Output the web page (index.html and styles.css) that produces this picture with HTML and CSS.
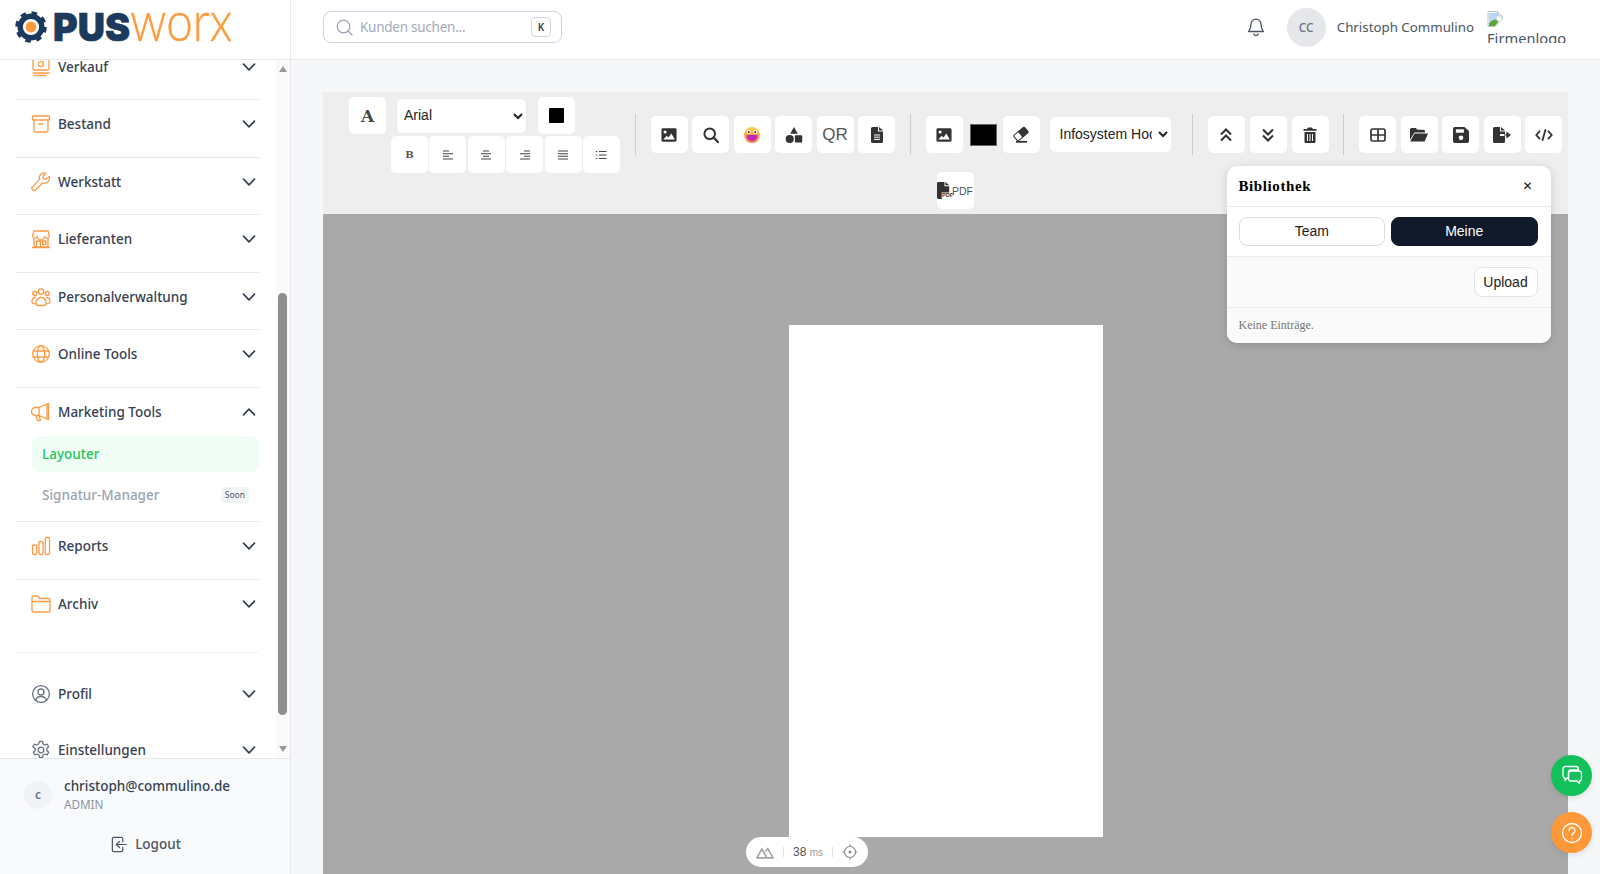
FILE: index.html
```html
<!DOCTYPE html>
<html lang="de">
<head>
<meta charset="utf-8">
<title>Layouter</title>
<link rel="stylesheet" href="styles.css">
</head>
<body>
<svg class="defs" width="0" height="0" aria-hidden="true">
  <symbol id="chev" viewBox="0 0 14 14"><path d="M1.5 4.2 7 9.8l5.5-5.6" fill="none" stroke="currentColor" stroke-width="1.7" stroke-linecap="round" stroke-linejoin="round"/></symbol>
  <symbol id="img" viewBox="0 0 18 16"><rect x=".5" y=".5" width="17" height="15" rx="1.6" fill="currentColor"/><circle cx="4.6" cy="4.6" r="1.7" fill="#fff"/><path d="M2.6 13.2 6.4 8.8l2 2 3.2-4.6 4 7z" fill="#fff"/></symbol>
</svg>
<div class="app">
  <aside class="sidebar">
    <div class="logo-row">
      <svg class="logo" width="232" height="44" viewBox="0 0 232 44">
        <circle cx="31" cy="27" r="13.6" fill="none" stroke="#1b3a5c" stroke-width="4.4" stroke-dasharray="5.3 5.4"/>
        <circle cx="31" cy="27" r="10.8" fill="none" stroke="#1b3a5c" stroke-width="5.4"/>
        <circle cx="31" cy="27" r="5.4" fill="#ff9a3c"/>
        <text class="logo-a" x="53" y="41" textLength="77" lengthAdjust="spacingAndGlyphs">PUS</text>
        <text class="logo-b" x="130" y="41" textLength="102" lengthAdjust="spacingAndGlyphs">worx</text>
      </svg>
    </div>
    <nav class="nav">
      <div class="nav-inner">
        <div class="item"><div class="head">
          <svg class="ico" viewBox="0 0 20 20"><rect x="2" y="1" width="16" height="12" rx="1"/><circle cx="10" cy="7" r="2.6"/><path d="M2 16h16M3 18.5h12"/></svg>
          <span class="label">Verkauf</span><svg class="chev"><use href="#chev"/></svg></div></div>
        <div class="item"><div class="head">
          <svg class="ico" viewBox="0 0 20 20"><rect x="1.5" y="2" width="17" height="4" rx=".8"/><path d="M3 6v10.5a1.5 1.5 0 0 0 1.5 1.5h11a1.5 1.5 0 0 0 1.5-1.5V6M8 10h4"/></svg>
          <span class="label">Bestand</span><svg class="chev"><use href="#chev"/></svg></div></div>
        <div class="item"><div class="head">
          <svg class="ico" viewBox="0 0 20 20"><path d="M18.2 4.4 15 7.4l-2.5-.6-.6-2.5 3-3a5 5 0 0 0-6.4 6.3L1.6 14.6a2.2 2.2 0 0 0 3.2 3.2l7-7a5 5 0 0 0 6.4-6.4z"/></svg>
          <span class="label">Werkstatt</span><svg class="chev"><use href="#chev"/></svg></div></div>
        <div class="item"><div class="head">
          <svg class="ico" viewBox="0 0 20 20"><path d="M3 2h14l1.5 5a2.6 2.6 0 0 1-5 .5 2.8 2.8 0 0 1-7 0 2.6 2.6 0 0 1-5-.5zM3 9.500V18h14V9.500M1.500 18.500h17"/><path d="M5.500 18v-6h4v6M11.500 12h3.500v3.500h-3.500z"/></svg>
          <span class="label">Lieferanten</span><svg class="chev"><use href="#chev"/></svg></div></div>
        <div class="item"><div class="head">
          <svg class="ico" viewBox="0 0 20 20"><circle cx="10" cy="4.500" r="2.700"/><circle cx="3.800" cy="6.500" r="2"/><circle cx="16.200" cy="6.500" r="2"/><path d="M5 17c0-3 .5-6.500 5-6.500s5 3.500 5 6.500a2 2 0 0 1-2 1.500H7A2 2 0 0 1 5 17zM4.300 10.500C2 10.500 1 12 1 14.500s2 2.300 3.500 2.300M15.700 10.500c2.300 0 3.300 1.500 3.300 4s-2 2.300-3.500 2.300"/></svg>
          <span class="label">Personalverwaltung</span><svg class="chev"><use href="#chev"/></svg></div></div>
        <div class="item"><div class="head">
          <svg class="ico" viewBox="0 0 20 20"><circle cx="10" cy="10" r="8.300"/><ellipse cx="10" cy="10" rx="3.700" ry="8.300"/><path d="M2.300 7h15.400M2.300 13h15.400"/></svg>
          <span class="label">Online Tools</span><svg class="chev"><use href="#chev"/></svg></div></div>
        <div class="item"><div class="head">
          <svg class="ico" viewBox="0 0 20 20"><path d="M8 5.500 16 2v15l-8-3.500H4.500a3.500 3.500 0 0 1 0-8zM16 2l1.500-.5V17.500L16 17M8 5.500v8M5 13.500l1.500 5h3L8 13.500"/></svg>
          <span class="label">Marketing Tools</span><svg class="chev up"><use href="#chev"/></svg></div>
          <div class="sub active">Layouter</div>
          <div class="sub muted"><span>Signatur-Manager</span><span class="soon">Soon</span></div>
        </div>
        <div class="item"><div class="head">
          <svg class="ico" viewBox="0 0 20 20"><rect x="1.500" y="9" width="4.200" height="9.500" rx="1.400"/><rect x="7.900" y="5.500" width="4.200" height="13" rx="1.400"/><rect x="14.300" y="1.500" width="4.200" height="17" rx="1.400"/></svg>
          <span class="label">Reports</span><svg class="chev"><use href="#chev"/></svg></div></div>
        <div class="item last"><div class="head">
          <svg class="ico" viewBox="0 0 20 20"><path d="M1 5V3.500A1.500 1.500 0 0 1 2.500 2h4.300l2 2.500h8.700A1.500 1.500 0 0 1 19 6v10.500a1.500 1.500 0 0 1-1.500 1.500h-15A1.500 1.500 0 0 1 1 16.500zM1 7.500h18"/></svg>
          <span class="label">Archiv</span><svg class="chev"><use href="#chev"/></svg></div></div>
        <div class="group-sep"></div>
        <div class="item last plain"><div class="head">
          <svg class="ico gray" viewBox="0 0 20 20"><circle cx="10" cy="10" r="8.400"/><circle cx="10" cy="8" r="3"/><path d="M4.500 16c1-2.500 3-3.500 5.500-3.500s4.500 1 5.500 3.500"/></svg>
          <span class="label">Profil</span><svg class="chev"><use href="#chev"/></svg></div></div>
        <div class="item last plain"><div class="head">
          <svg class="ico gray" viewBox="0 0 20 20"><path d="M8.500 1.500h3l.5 2.500 1.800 1 2.400-.8 1.500 2.600-1.900 1.700v2l1.900 1.700-1.500 2.600-2.400-.8-1.800 1-.5 2.500h-3l-.5-2.500-1.800-1-2.400.8-1.500-2.600 1.900-1.700v-2L1.800 6.800l1.500-2.600 2.400.8 1.800-1z"/><circle cx="10" cy="10" r="2.800"/></svg>
          <span class="label">Einstellungen</span><svg class="chev"><use href="#chev"/></svg></div></div>
      </div>
      <div class="scrollbar">
        <span class="arrow-up"></span>
        <span class="thumb"></span>
        <span class="arrow-down"></span>
      </div>
    </nav>
    <div class="side-foot">
      <div class="user">
        <span class="user-av">c</span>
        <div class="user-text"><div class="mail">christoph@commulino.de</div><div class="role">ADMIN</div></div>
      </div>
      <div class="logout">
        <svg class="logout-ico" viewBox="0 0 18 18"><path d="M13.500 6V3A1.500 1.500 0 0 0 12 1.500H4A1.500 1.500 0 0 0 2.500 3v12A1.500 1.500 0 0 0 4 16.500h8a1.500 1.500 0 0 0 1.500-1.500v-3M17 9H7M10 5.800 6.800 9l3.200 3.200"/></svg>
        <span>Logout</span>
      </div>
    </div>
  </aside>

  <div class="main">
    <header class="topbar">
      <div class="search">
        <svg class="search-ico" viewBox="0 0 18 18"><circle cx="8" cy="8" r="6.700"/><path d="m13 13 4 4"/></svg>
        <span class="placeholder">Kunden suchen...</span>
        <span class="kbd">K</span>
      </div>
      <div class="top-right">
        <svg class="bell" viewBox="0 0 20 20"><path d="M10 2.200a5 5 0 0 0-5 5c0 5-2 6.300-2.500 7.300h15c-.5-1-2.500-2.300-2.500-7.300a5 5 0 0 0-5-5zM7.800 17a2.300 2.300 0 0 0 4.400 0"/></svg>
        <span class="top-av">CC</span>
        <span class="top-name">Christoph Commulino</span>
        <div class="firm">
          <svg class="broken" viewBox="0 0 16 16"><path d="M1 .5h9.500L15 5v3.500L11 12l-3 3.500H1z" fill="#fff" stroke="#b9c2cc"/><path d="M10.500.5V5H15" fill="#dfe6ee" stroke="#b9c2cc"/><path d="M2 2h8v6l-3 2-5 1z" fill="#bcd6f5"/><path d="M2 15v-3c2-2.500 5-3.500 7-3.500l2.500 2L8 15z" fill="#5aa83a"/></svg>
          <div class="firm-text">Firmenlogo</div>
        </div>
      </div>
    </header>

    <main class="content">
      <div class="toolbar">
        <div class="g1">
          <div class="g1-top">
            <span class="btn big-a">A</span>
            <select class="sel font-sel"><option>Arial</option></select>
            <span class="btn"><span class="black-sq"></span></span>
          </div>
          <div class="g1-bot">
            <span class="btn small-b">B</span>
            <span class="btn"><svg class="tic s12" viewBox="0 0 12 12"><path class="ln" d="M1 2h6M1 4.700h10M1 7.300h6M1 10h10"/></svg></span>
            <span class="btn"><svg class="tic s12" viewBox="0 0 12 12"><path class="ln" d="M3 2h6M1 4.700h10M3 7.300h6M1 10h10"/></svg></span>
            <span class="btn"><svg class="tic s12" viewBox="0 0 12 12"><path class="ln" d="M5 2h6M1 4.700h10M5 7.300h6M1 10h10"/></svg></span>
            <span class="btn"><svg class="tic s12" viewBox="0 0 12 12"><path class="ln" d="M1 2h10M1 4.700h10M1 7.300h10M1 10h10"/></svg></span>
            <span class="btn"><svg class="tic s12" viewBox="0 0 12 12"><path class="ln" d="M4 2.500h7.500M4 6h7.500M4 9.500h7.500M.8 2.500h1.500M.8 6h1.500M.8 9.500h1.500"/></svg></span>
          </div>
        </div>
        <span class="sep"></span>
        <div class="grp">
          <span class="btn"><svg class="tic s16"><use href="#img"/></svg></span>
          <span class="btn"><svg class="tic s16" viewBox="0 0 16 16"><circle cx="6.700" cy="6.700" r="5.300" fill="none" stroke="currentColor" stroke-width="2"/><path d="m10.600 10.600 4.600 4.600" stroke="currentColor" stroke-width="2.200" stroke-linecap="round"/></svg></span>
          <span class="btn"><svg class="tic s18" viewBox="0 0 18 18"><defs><linearGradient id="emo" x1="0" y1="0" x2="0" y2="1"><stop offset="0" stop-color="#ffd23f"/><stop offset="1" stop-color="#fb7a52"/></linearGradient></defs><circle cx="9" cy="9" r="8" fill="url(#emo)"/><circle cx="5.800" cy="5.800" r="2" fill="#fff"/><circle cx="12.200" cy="5.800" r="2" fill="#fff"/><circle cx="5.800" cy="6" r="1" fill="#5a3a2a"/><circle cx="12.200" cy="6" r="1" fill="#5a3a2a"/><path d="M3.500 9h11c0 4-2.500 6-5.500 6s-5.500-2-5.500-6z" fill="#c02cb8"/></svg></span>
          <span class="btn"><svg class="tic s18" viewBox="0 0 16 16" fill="currentColor"><path d="M8 .8 11.400 6.800H4.600z"/><circle cx="4.200" cy="11.500" r="3.600"/><rect x="8.800" y="8.200" width="6.500" height="6.500" rx=".8"/></svg></span>
          <span class="btn qr">QR</span>
          <span class="btn"><svg class="tic s16" viewBox="0 0 12 16"><path d="M1.500 0H7v4.500h5V14.500A1.500 1.500 0 0 1 10.500 16h-9A1.500 1.500 0 0 1 0 14.500v-13A1.500 1.500 0 0 1 1.500 0zM8 0l4 3.500H8z" fill="currentColor"/><path d="M3 8h6M3 10.200h6M3 12.400h6" stroke="#fff" stroke-width="1"/></svg></span>
        </div>
        <span class="sep"></span>
        <div class="grp g3">
          <span class="btn"><svg class="tic s16"><use href="#img"/></svg></span>
          <span class="swatch"></span>
          <span class="btn"><svg class="tic s18" viewBox="0 0 18 16"><g transform="rotate(-40 9 7)"><rect x="1.500" y="3" width="15" height="8" rx="1.500" fill="currentColor"/><rect x="2.500" y="4" width="5.500" height="6" rx=".8" fill="#fff"/></g><path d="M4 14.800h11" stroke="currentColor" stroke-width="1.800"/></svg></span>
          <select class="sel info-sel"><option>Infosystem Hochformat</option></select>
        </div>
        <span class="sep wide"></span>
        <div class="grp g4">
          <span class="btn"><svg class="tic s16" viewBox="0 0 16 16"><path d="M3 7.500 8 2.500l5 5M3 13.500l5-5 5 5" fill="none" stroke="currentColor" stroke-width="2.100"/></svg></span>
          <span class="btn"><svg class="tic s16" viewBox="0 0 16 16"><path d="M3 2.500l5 5 5-5M3 8.500l5 5 5-5" fill="none" stroke="currentColor" stroke-width="2.100"/></svg></span>
          <span class="btn"><svg class="tic s16" viewBox="0 0 14 16"><path d="M5 .5h4l1 1.500h3.500v1.800H.5V2H4zM1.500 5h11v9.500a1.500 1.500 0 0 1-1.500 1.500H3a1.500 1.500 0 0 1-1.500-1.500z" fill="currentColor"/><path d="M4.500 7v7M7 7v7M9.500 7v7" stroke="#fff" stroke-width="1"/></svg></span>
        </div>
        <span class="sep"></span>
        <div class="grp g5">
          <span class="btn"><svg class="tic s16" viewBox="0 0 16 14"><rect x="1" y="1" width="14" height="12" rx="1.500" fill="none" stroke="currentColor" stroke-width="1.700"/><path d="M1 7h14M8 1v12" stroke="currentColor" stroke-width="1.700"/></svg></span>
          <span class="btn"><svg class="tic s18" viewBox="0 0 18 15"><path d="M0 2a1.500 1.500 0 0 1 1.500-1.500h4.300l1.700 1.700h6A1.500 1.500 0 0 1 15 3.700V5H4.500L0 12z" fill="currentColor"/><path d="M4.500 6H18l-3.500 8H0z" fill="currentColor"/></svg></span>
          <span class="btn"><svg class="tic s16" viewBox="0 0 14 14"><path d="M1.500 0H10l4 3.500v9A1.500 1.500 0 0 1 12.500 14h-11A1.500 1.500 0 0 1 0 12.500v-11A1.500 1.500 0 0 1 1.500 0z" fill="currentColor"/><rect x="2.500" y="2" width="7" height="3" fill="#fff"/><circle cx="7" cy="9.500" r="2" fill="#fff"/></svg></span>
          <span class="btn"><svg class="tic s18" viewBox="0 0 18 16"><path d="M1.500 0H7v4.500h5V7H7v2h5v5.500a1.500 1.500 0 0 1-1.500 1.500h-9A1.500 1.500 0 0 1 0 14.500v-13A1.500 1.500 0 0 1 1.500 0zM8 0l4 3.500H8z" fill="currentColor"/><path d="M11 8h4.500M14 5.800 17 8l-3 2.200z" stroke="currentColor" stroke-width="1.200" fill="currentColor"/></svg></span>
          <span class="btn"><svg class="tic s18" viewBox="0 0 20 16"><path d="M5.500 3.500 1.500 8l4 4.500M14.500 3.500l4 4.500-4 4.500M11.800 1.500 8.200 14.500" fill="none" stroke="currentColor" stroke-width="2"/></svg></span>
        </div>
        <span class="btn pdf"><svg class="pdf-ico" viewBox="0 0 16 18"><path d="M1.200 0H8v4.500h5V11H5v7H1.200A1.200 1.200 0 0 1 0 16.800V1.200A1.200 1.200 0 0 1 1.200 0zM9 0l4 3.500H9z" fill="currentColor"/></svg><span class="pdf-tiny">PDF</span><span class="pdf-word">PDF</span></span>
      </div>
      <div class="canvas">
        <div class="sheet"></div>
        <div class="status">
          <svg class="nuxt" viewBox="0 0 20 14"><path d="M1 13 6.500 3l5.500 10zM10.500 6l2.500-3.500L19 13h-7" fill="none" stroke="#a3a3a3" stroke-width="1.800" stroke-linejoin="round"/></svg>
          <span class="st-div"></span>
          <span class="ms"><b>38</b> <i>ms</i></span>
          <span class="st-div"></span>
          <svg class="target" viewBox="0 0 16 16"><circle cx="8" cy="8" r="5.500" fill="none" stroke="#8a8a8a" stroke-width="1.200"/><circle cx="8" cy="8" r="1.500" fill="#8a8a8a"/><path d="M8 .5v2M8 13.500v2M.5 8h2M13.500 8h2" stroke="#8a8a8a" stroke-width="1.200"/></svg>
        </div>
      </div>
      <section class="library">
        <div class="lib-head"><span class="lib-title">Bibliothek</span><span class="lib-close">✕</span></div>
        <div class="lib-tabs"><button class="tab">Team</button><button class="tab on">Meine</button></div>
        <div class="lib-upload"><button class="upload">Upload</button></div>
        <div class="lib-empty">Keine Einträge.</div>
      </section>
    </main>
  </div>
</div>
<div class="fab green"><svg viewBox="0 0 24 24"><path d="M6 2.500h10A2.500 2.500 0 0 1 18.500 5v1H11a2.500 2.500 0 0 0-2.500 2.500V14H7l-2 2.500V14a2.500 2.500 0 0 1-2-2.500V5A2.500 2.500 0 0 1 6 2.500z"/><path d="M11 7h8a2.500 2.500 0 0 1 2.500 2.500v5A2.500 2.500 0 0 1 19.500 17v2.500L17 17h-6a2.500 2.500 0 0 1-2.500-2.500v-5A2.500 2.500 0 0 1 11 7z"/></svg></div>
<div class="fab orange"><svg viewBox="0 0 24 24"><circle cx="12" cy="12" r="9.500"/><path d="M9 9.500a3 3 0 1 1 4.500 2.600c-1 .6-1.500 1.200-1.500 2.400M12 17.500v.3"/></svg></div>
</body>
</html>
```
FILE: styles.css
```css
* { box-sizing: border-box; }
html, body { margin: 0; height: 874px; overflow: hidden; }
body { font-family: "Noto Sans", sans-serif; font-size: 13.5px; color: #374151; background: #f6f7f9; }
.defs { position: absolute; }
.app { display: flex; height: 874px; }

/* sidebar */
.sidebar { width: 291px; flex: none; display: flex; flex-direction: column; background: #fff; border-right: 1px solid #e5e7eb; }
.logo-row { height: 60px; flex: none; border-bottom: 1px solid #e5e7eb; }
.logo { display: block; overflow: visible; }
.logo-a { font-family: Inter, sans-serif; font-weight: 900; font-size: 38.5px; fill: #1b3a5c; stroke: #1b3a5c; stroke-width: .6px; }
.logo-b { font-family: Lato, sans-serif; font-weight: 300; font-size: 55px; fill: #ff9a3c; stroke: #ff9a3c; stroke-width: .4px; }
.nav { flex: 1; position: relative; overflow: hidden; }
.nav-inner { margin-top: -17.5px; padding-left: 15px; width: 259px; }
.item { padding-bottom: 8px; border-bottom: 1px solid #e5e7eb; }
.item.last { border-bottom: 0; }
.item.plain { padding-bottom: 8px; }
.head { height: 48.5px; display: flex; align-items: center; padding: 0 3px 0 16px; }
.ico { width: 20px; height: 20px; flex: none; fill: none; stroke: #fb9a45; stroke-width: 1.3; stroke-linejoin: round; stroke-linecap: round; }
.ico.gray { stroke: #6b7280; }
.label { flex: 1; margin-left: 7px; font-weight: 500; color: #374151; }
.chev { width: 14px; height: 14px; flex: none; color: #374151; }
.chev.up { transform: rotate(180deg); }
.sub { margin-left: 17px; padding: 0 10px; font-weight: 500; display: flex; align-items: center; justify-content: space-between; }
.sub.active { height: 36px; background: #f0fdf4; border-radius: 8px; color: #22c55e; }
.sub.muted { height: 38px; margin-top: 4px; margin-bottom: -1px; color: #9ca3af; }
.soon { font-size: 8.5px; font-weight: 400; color: #4b5563; background: #f3f4f6; border-radius: 4px; padding: 2px 4px; line-height: 12px; }
.group-sep { height: 1px; background: #f3f4f6; margin-top: 15.500px; margin-bottom: 17px; }
.scrollbar { position: absolute; right: 0; top: 0; bottom: 0; width: 14px; background: #fafafa; }
.thumb { position: absolute; left: 2px; top: 233px; width: 9px; height: 422px; border-radius: 5px; background: #8f8f8f; }
.arrow-up { position: absolute; left: 3px; top: 6px; border: 4.500px solid transparent; border-top: 0; border-bottom: 6px solid #9a9a9a; }
.arrow-down { position: absolute; left: 3px; bottom: 6px; border: 4.500px solid transparent; border-bottom: 0; border-top: 6px solid #9a9a9a; }
.side-foot { height: 116px; flex: none; background: #f9fafb; border-top: 1px solid #e5e7eb; padding: 17px 0 0 24px; position: relative; z-index: 1; }
.user { display: flex; align-items: center; }
.user-av { width: 28px; height: 28px; border-radius: 50%; background: #f1f3f6; color: #6b7280; font-size: 12px; font-weight: 600; display: flex; align-items: center; justify-content: center; flex: none; }
.user-text { margin-left: 12px; }
.mail { font-size: 13.500px; font-weight: 500; line-height: 20px; color: #374151; }
.role { font-size: 11.700px; line-height: 17px; color: #8b93a0; }
.logout { display: flex; align-items: center; justify-content: center; margin-top: 22px; padding-right: 23px; font-weight: 500; color: #4b5563; }
.logout-ico { width: 17px; height: 17px; margin-right: 8px; fill: none; stroke: #4b5563; stroke-width: 1.300; stroke-linecap: round; stroke-linejoin: round; }

/* top bar */
.main { flex: 1; min-width: 0; display: flex; flex-direction: column; }
.topbar { height: 60px; flex: none; background: #fff; border-bottom: 1px solid #e5e7eb; display: flex; align-items: center; justify-content: space-between; padding: 0 33px 0 32px; }
.search { width: 239px; height: 32px; margin-top: -5px; border: 1px solid #cbd5e1; border-radius: 8px; display: flex; align-items: center; padding: 0 10px 0 12px; }
.search-ico { width: 17px; height: 17px; fill: none; stroke: #9aa4b5; stroke-width: 1.300; stroke-linecap: round; }
.placeholder { flex: 1; margin-left: 7px; padding-bottom: 1px; letter-spacing: -.25px; color: #a3abbd; }
.kbd { width: 20px; height: 20px; border: 1px solid #d1d5db; border-radius: 4px; font-size: 10px; font-weight: 600; display: flex; align-items: center; justify-content: center; color: #374151; }
.top-right { display: flex; align-items: center; margin-top: -5px; }
.bell { width: 20px; height: 20px; fill: none; stroke: #4b5563; stroke-width: 1.300; stroke-linejoin: round; stroke-linecap: round; margin-right: 21px; }
.top-av { width: 39px; height: 39px; border-radius: 50%; background: #e5e7eb; font-size: 12px; font-weight: 500; color: #6b7280; display: flex; align-items: center; justify-content: center; }
.top-name { margin-left: 11px; margin-right: 13px; color: #4b5563; white-space: nowrap; font-size: 13.300px; }
.firm { width: 80px; height: 32px; overflow: hidden; line-height: 1; }
.broken { display: block; width: 16px; height: 16px; }
.firm-text { font-size: 14.700px; line-height: 22px; color: #4b5563; }

/* canvas */
.content { flex: 1; position: relative; padding: 32px 32px 0 32px; display: flex; flex-direction: column; min-height: 0; }
.toolbar { flex: none; height: 122px; background: #eeeeee; display: flex; flex-wrap: wrap; justify-content: center; align-items: center; align-content: flex-start; padding: 5px 0 5px 20px; }
.btn { width: 37px; height: 37px; flex: none; background: #fff; border-radius: 5px; display: flex; align-items: center; justify-content: center; color: #333; }
.g1 { width: 271px; display: flex; flex-direction: column; height: 75px; }
.g1-top { display: flex; align-items: center; }
.g1-bot { display: flex; gap: 1.400px; padding-left: 42px; margin-top: 2px; }
.big-a { font-family: "DejaVu Serif", serif; font-weight: 700; font-size: 17px; color: #444; }
.small-b { font-family: "DejaVu Serif", serif; font-weight: 700; font-size: 10px; color: #555; }
.sel { font-family: "Liberation Sans", Arial, sans-serif; font-size: 14px; background: #fff; color: #222; border: 1px solid #e8e8e8; border-radius: 6px; padding: 0 3px 2px; }
.font-sel { width: 131px; height: 36px; margin: 0 11px 0 10px; }
.info-sel { width: 121px; height: 35px; margin-left: 4px; padding-left: 6px; border: 0; }
.black-sq { width: 15px; height: 15px; background: #000; border-radius: 1px; }
.sep { width: 1px; height: 41px; background: #cccccc; margin: 0 15px 0 14.500px; flex: none; }
.sep.wide { margin-left: 21px; }
.grp { display: flex; align-items: center; gap: 4.500px; flex: none; }
.g3 { gap: 6px; }
.g4 { gap: 5px; }
.g5 { gap: 4.500px; }
.tic { display: block; }
.s12 { width: 12px; height: 12px; }
.s16 { width: 16px; height: 16px; }
.s18 { width: 18px; height: 18px; }
.ln { fill: none; stroke: #444; stroke-width: 1.100; }
.qr { font-family: "Liberation Sans", Arial, sans-serif; font-size: 17px; color: #555; }
.swatch { width: 27px; height: 22px; margin: 0 0 0 1px; background: #000; border: 1px solid #666; }
.pdf { position: relative; justify-content: flex-start; font-family: "Liberation Sans", Arial, sans-serif; }
.pdf-ico { width: 15px; height: 17px; flex: none; }
.pdf-tiny { position: absolute; left: 5px; top: 20px; font-size: 5.500px; font-weight: 700; color: #333; line-height: 6px; }
.pdf-word { font-size: 10.500px; color: #555; margin-top: 1px; }
.canvas { flex: 1; min-height: 0; position: relative; background: #a9a9a9; overflow: hidden; }
.sheet { position: absolute; left: 466px; top: 111px; width: 314px; height: 512px; background: #fff; }
.status { position: absolute; left: 423px; top: 623px; width: 122px; height: 30px; background: #fff; border-radius: 15px; display: flex; align-items: center; padding: 0 10px; justify-content: space-between; }
.nuxt { width: 18px; height: 13px; }
.st-div { width: 1px; height: 10px; background: #e0e0e0; }
.ms { font-family: "Liberation Sans", Arial, sans-serif; font-size: 12px; color: #555; }
.ms b { font-weight: 400; }
.ms i { font-style: normal; font-size: 10px; color: #999; }
.target { width: 16px; height: 16px; }

/* library panel */
.library { position: absolute; left: 935.500px; top: 106px; width: 324px; background: #fff; border-radius: 10px; box-shadow: 0 2px 10px rgba(0, 0, 0, .15); overflow: hidden; font-family: "Liberation Serif", serif; color: #000; }
.lib-head { height: 41px; display: flex; align-items: center; justify-content: space-between; padding: 0 18px 0 12px; border-bottom: 1px solid #ececec; }
.lib-title { font-weight: 700; font-size: 15px; letter-spacing: .6px; }
.lib-close { font-family: "DejaVu Sans", sans-serif; font-size: 12px; font-weight: 700; color: #111; }
.lib-tabs { height: 50px; display: flex; gap: 6px; align-items: center; padding: 0 13px 0 12px; border-bottom: 1px solid #ececec; }
.tab { flex: 1; height: 29px; padding: 0 0 2px; border: 1px solid #dcdcdc; border-radius: 8px; background: #fff; font-family: "Liberation Sans", Arial, sans-serif; font-size: 14px; color: #222; }
.tab.on { background: #111a2b; border-color: #111a2b; color: #fff; }
.lib-upload { height: 51px; display: flex; align-items: center; justify-content: flex-end; padding-right: 13px; background: #fafafa; border-bottom: 1px solid #ececec; }
.upload { width: 64px; height: 30px; padding: 0; border: 1px solid #e2e2e2; border-radius: 8px; background: #fff; font-family: "Liberation Sans", Arial, sans-serif; font-size: 14px; color: #222; }
.lib-empty { height: 35px; display: flex; align-items: center; padding-left: 12px; background: #fafafa; font-size: 12px; color: #777; }

/* floating */
.fab { position: fixed; left: 1551px; width: 41px; height: 41px; border-radius: 50%; display: flex; align-items: center; justify-content: center; box-shadow: 0 2px 6px rgba(0, 0, 0, .1); }
.fab svg { width: 24px; height: 24px; fill: none; stroke: #fff; stroke-width: 1.300; stroke-linejoin: round; stroke-linecap: round; }
.fab.green { top: 755px; background: #12c15a; }
.fab.orange { top: 812px; background: #ff9838; }
```
